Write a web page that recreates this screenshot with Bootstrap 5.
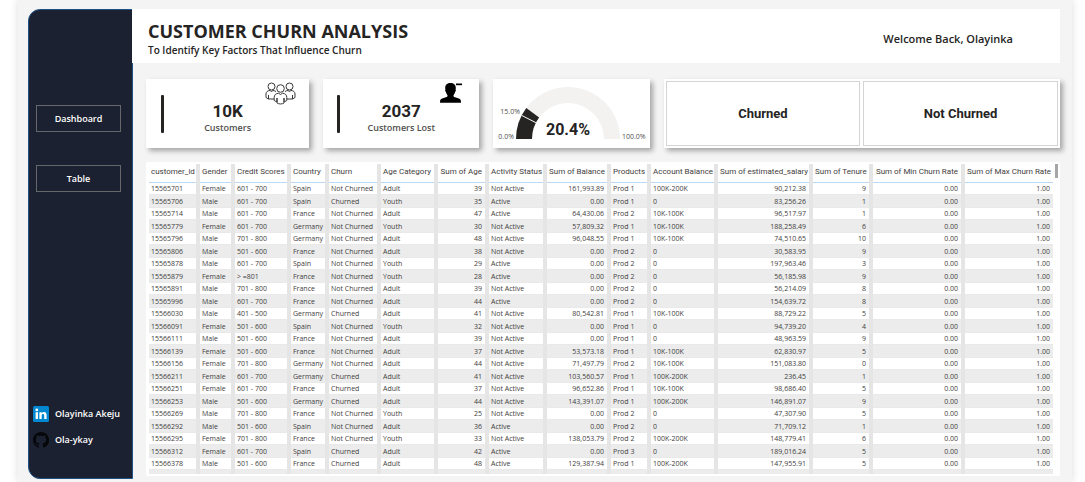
<!DOCTYPE html>
<html lang="en">
<head>
<meta charset="utf-8">
<meta name="viewport" content="width=device-width, initial-scale=1">
<title>Customer Churn Analysis</title>
<link href="https://cdn.jsdelivr.net/npm/bootstrap@5.3.0/dist/css/bootstrap.min.css" rel="stylesheet">
<style>
body { font-family: "Open Sans", "Noto Sans", sans-serif; color: #252423; background: #fff; }
.report { height: 100vh; min-height: 460px; margin: 0 13px 0 18px; padding: 9px 12px 3px 10px; background: #f4f4f4; box-shadow: 0 0 8px rgba(0,0,0,.14); }
.side { width: 105px; background: #1b2130; border: 1px solid #1d5388; border-radius: 12px 0 0 12px; padding: 95px 11px 30px 7px; }
.side .page-btn { height: 27px; border: 1px solid #66676a; border-radius: 0; color: #fff; font-size: 9px; line-height: 12px; font-weight: 600; padding: 0; margin-bottom: 33px; }
.side .profile { color: #fff; font-size: 9px; line-height: 16px; font-weight: 600; margin: 0 0 10px -3px; gap: 6px; white-space: nowrap; }
.side .profile:last-child { margin-bottom: 0; }
.side .profile svg { flex: none; }
.content { min-width: 0; }
.banner { height: 54px; background: #fff; margin-left: -1px; padding: 0 47px 0 16px; }
.banner h1 { font-size: 18px; line-height: 24px; font-weight: 700; margin: 0; }
.banner h2 { font-size: 10px; line-height: 14px; font-weight: 600; margin: 0; }
.welcome { font-size: 11px; line-height: 16px; font-weight: 600; padding-top: 6px; }
.tiles { display: grid; grid-template-columns: 163fr 156fr 156fr 396fr; gap: 14px; margin: 16px 0 14px 13px; height: 69px; }
.tile { background: #fff; box-shadow: 3px 3px 5px rgba(0,0,0,.32); position: relative; }
.tile .rule { width: 3px; height: 38px; border-radius: 1px; background: #252423; position: absolute; left: 9%; top: 16px; }
.tile .pic { position: absolute; right: 13px; top: 3px; }
.tile .pic-lost { right: 17px; }
.tile .value { font: 700 17px/20px Roboto, sans-serif; }
.tile .caption { font-size: 9px; line-height: 14px; font-weight: 600; color: #504f4e; }
.slicer { padding: 2px; gap: 3px; }
.slicer .btn { flex: 1 1 0; border: 1px solid #d4d4d4; border-radius: 0; font: 700 13px/18px Roboto, sans-serif; color: #252423; padding: 0; }
.gauge text { font-family: "Open Sans", sans-serif; font-size: 7px; fill: #504f4e; }
.gauge .total { font: 700 16px Roboto, sans-serif; fill: #252423; }
.grid-box { background: #fff; margin-left: 13px; padding: 2px 7px 2px 3px; position: relative; min-height: 0; margin-bottom: 3px; }
.grid-scroll { height: 100%; overflow-y: auto; scrollbar-width: none; }
.grid-scroll::-webkit-scrollbar { display: none; }
.thumb { position: absolute; right: 2px; top: 2px; width: 3px; height: 14px; background: #a6a6a6; }
.data { width: 100%; table-layout: fixed; border-collapse: separate; border-spacing: 0; font-size: 7px; line-height: 11px; color: #3f3e3d; white-space: nowrap; }
.data th, .data td { padding: 0 3px 0 2px; border: 0; border-right: 4px solid #e5e5e5; }
.data th:last-child, .data td:last-child { border-right: 0; }
.data th { position: sticky; top: 0; background: #fff; height: 19px; font-family: Roboto, sans-serif; font-size: 8px; line-height: 13px; font-weight: 400; padding-bottom: 4px; box-shadow: inset 0 -1px #b9d9f7; }
.data td { height: 12px; border-bottom: 1px solid #e9e9e9; }
.data tr:nth-child(even) td { height: 13px; background: #ececec; }
.data .num { text-align: right; }
</style>
</head>
<body>
<div class="report d-flex">
  <nav class="side d-flex flex-column flex-shrink-0">
    <button type="button" class="btn page-btn">Dashboard</button>
    <button type="button" class="btn page-btn">Table</button>
    <a href="#linkedin" class="profile mt-auto d-flex align-items-center text-decoration-none">
      <svg width="16" height="16" viewBox="0 0 16 16" aria-hidden="true"><rect width="16" height="16" rx="1.5" fill="#0288d1"/><g fill="#fff"><circle cx="3.8" cy="3.9" r="1.4"/><path d="M2.6 6.2H5V13H2.6zM6.4 6.2h2.3v1c.5-.8 1.2-1.2 2.2-1.2 1.8 0 2.7 1.1 2.7 3.200V13h-2.400V9.500c0-1-.4-1.600-1.200-1.600-.9 0-1.300.6-1.300 1.600V13H6.400z"/></g></svg>
      <span>Olayinka Akeju</span>
    </a>
    <a href="#github" class="profile d-flex align-items-center text-decoration-none">
      <svg width="16" height="16" viewBox="0 0 16 16" aria-hidden="true"><path fill="#06070a" d="M8 0C3.580 0 0 3.580 0 8c0 3.540 2.290 6.530 5.470 7.590.4.070.55-.17.55-.38 0-.19-.01-.82-.01-1.490-2.010.37-2.530-.49-2.690-.94-.09-.23-.48-.94-.82-1.130-.28-.15-.68-.52-.01-.53.63-.01 1.080.58 1.230.82.72 1.210 1.870.87 2.330.66.07-.52.28-.87.51-1.070-1.780-.2-3.640-.89-3.640-3.950 0-.87.31-1.590.82-2.150-.08-.2-.36-1.020.08-2.120 0 0 .67-.21 2.200.82.64-.18 1.320-.27 2-.27s1.360.09 2 .27c1.530-1.040 2.200-.82 2.200-.82.44 1.100.16 1.920.08 2.120.51.56.82 1.270.82 2.150 0 3.070-1.870 3.750-3.650 3.950.29.25.54.73.54 1.480 0 1.070-.01 1.930-.01 2.200 0 .21.15.46.55.38A8.010 8.010 0 0 0 16 8c0-4.420-3.580-8-8-8z"/></svg>
      <span>Ola-ykay</span>
    </a>
  </nav>

  <main class="content flex-grow-1 d-flex flex-column">
    <header class="banner d-flex align-items-center justify-content-between flex-shrink-0">
      <div class="pt-1">
        <h1>CUSTOMER CHURN ANALYSIS</h1>
        <h2>To Identify Key Factors That Influence Churn</h2>
      </div>
      <div class="welcome">Welcome Back, Olayinka</div>
    </header>

    <section class="tiles flex-shrink-0">
      <div class="tile text-center d-flex flex-column justify-content-center pt-2">
        <span class="rule"></span>
        <svg class="pic" width="31" height="23" viewBox="0 0 31 23" fill="none" stroke="#3a3938" aria-hidden="true">
          <circle cx="6.500" cy="4.500" r="3.500"/><circle cx="24.500" cy="4.500" r="3.500"/>
          <path d="M9.500 17H3.500V13v4L1 15.500V12c0-2 1.500-3.500 4-3.500l1.500 1 1.500-1c1.200 0 2.200.4 3 1.200M21.500 17h6V13v4l2.500-1.500V12c0-2-1.500-3.500-4-3.500l-1.500 1-1.500-1c-1.200 0-2.200.4-3 1.200"/>
          <circle cx="15.500" cy="6.500" r="3.800" fill="#fff"/>
          <path fill="#fff" d="M13.500 11.200c-2.800.3-4.300 1.800-4.300 4.300v3l2.800 1.500v-4V21c2 1.300 5 1.300 7 0v-5 4l2.800-1.500v-3c0-2.500-1.500-4-4.300-4.300l-2 1.300z"/>
        </svg>
        <div class="value">10K</div>
        <div class="caption">Customers</div>
      </div>
      <div class="tile text-center d-flex flex-column justify-content-center pt-2">
        <span class="rule"></span>
        <svg class="pic pic-lost" width="22" height="21" viewBox="0 0 22 21" aria-hidden="true"><path d="M10.500 1c3.200 0 5.300 1.900 5.300 4.800 0 .7-.1 1.300-.2 1.700.5.400.2 2-.5 2.600-.3 1.400-.8 2.400-1.600 3.100 0 1 .2 1.600.8 1.900l4.500 1.500c1.700.6 2.200 1.800 2.200 3.600 0 .3-.2.600-.6.600H.6c-.4 0-.6-.2-.6-.6 0-1.800.5-3 2.200-3.600l4.400-1.500c.7-.3.9-.9.9-1.900-.8-.7-1.300-1.700-1.600-3.100-.7-.6-1-2.200-.5-2.600-.1-.4-.2-1-.2-1.700C5.200 2.900 7.300 1 10.500 1z"/><path d="M16 1.500h6v1.700h-6z"/></svg>
        <div class="value">2037</div>
        <div class="caption">Customers Lost</div>
      </div>
      <div class="tile text-center d-flex justify-content-center">
        <svg class="gauge" width="156" height="69" viewBox="0 -1 156 69" role="img" aria-label="Churn rate 20.4%">
          <path fill="#f3f2f1" d="M23 59A52 52 0 0 1 127 59H111A36 36 0 0 0 39 59z"/>
          <path fill="#252423" d="M23 59A52 52 0 0 1 33.300 27.900L46.100 37.500A36 36 0 0 0 39 59z"/>
          <path stroke="#fff" d="M28.700 35.400L42.900 42.700"/>
          <text x="27" y="34" text-anchor="end">15.0%</text>
          <text x="21" y="59" text-anchor="end">0.0%</text>
          <text x="129" y="59">100.0%</text>
          <text x="75" y="55" text-anchor="middle" class="total">20.4%</text>
        </svg>
      </div>
      <div class="tile slicer d-flex">
        <button type="button" class="btn">Churned</button>
        <button type="button" class="btn">Not Churned</button>
      </div>
    </section>

    <section class="grid-box flex-grow-1">
      <div class="grid-scroll">
        <table class="data">
          <colgroup id="cols"></colgroup>
          <thead><tr id="head"></tr></thead>
          <tbody id="rows"></tbody>
        </table>
      </div>
      <span class="thumb"></span>
    </section>
  </main>
</div>
<script src="https://cdn.jsdelivr.net/npm/bootstrap@5.3.0/dist/js/bootstrap.bundle.min.js"></script>
<script>
// name, relative width, numeric
const columns = [
  ["customer_id", 51], ["Gender", 35], ["Credit Scores", 56], ["Country", 38], ["Churn", 52],
  ["Age Category", 57], ["Sum of Age", 51, 1], ["Activity Status", 58], ["Sum of Balance", 64, 1],
  ["Products", 40], ["Account Balance", 67], ["Sum of estimated_salary", 95, 1],
  ["Sum of Tenure", 60, 1], ["Sum of Min Churn Rate", 92, 1], ["Sum of Max Churn Rate", 88, 1]
];
const data = `15565701|Female|601 - 700|Spain|Not Churned|Adult|39|Not Active|161,993.89|Prod 1|100K-200K|90,212.38|9
15565706|Male|601 - 700|Spain|Churned|Youth|35|Active|0.00|Prod 1|0|83,256.26|1
15565714|Male|601 - 700|France|Not Churned|Adult|47|Active|64,430.06|Prod 2|10K-100K|96,517.97|1
15565779|Female|601 - 700|Germany|Not Churned|Youth|30|Not Active|57,809.32|Prod 1|10K-100K|188,258.49|6
15565796|Male|701 - 800|Germany|Not Churned|Adult|48|Not Active|96,048.55|Prod 1|10K-100K|74,510.65|10
15565806|Male|501 - 600|France|Not Churned|Adult|38|Not Active|0.00|Prod 2|0|30,583.95|9
15565878|Male|601 - 700|Spain|Not Churned|Youth|29|Active|0.00|Prod 2|0|197,963.46|3
15565879|Female|> =801|France|Not Churned|Youth|28|Active|0.00|Prod 2|0|56,185.98|9
15565891|Male|701 - 800|France|Not Churned|Adult|39|Not Active|0.00|Prod 2|0|56,214.09|8
15565996|Male|601 - 700|France|Not Churned|Adult|44|Active|0.00|Prod 2|0|154,639.72|8
15566030|Male|401 - 500|Germany|Churned|Adult|41|Not Active|80,542.81|Prod 1|10K-100K|88,729.22|5
15566091|Female|501 - 600|Spain|Not Churned|Youth|32|Not Active|0.00|Prod 1|0|94,739.20|4
15566111|Male|501 - 600|France|Not Churned|Adult|39|Not Active|0.00|Prod 1|0|48,963.59|9
15566139|Female|501 - 600|France|Not Churned|Adult|37|Not Active|53,573.18|Prod 1|10K-100K|62,830.97|5
15566156|Female|701 - 800|Germany|Not Churned|Adult|44|Not Active|71,497.79|Prod 2|10K-100K|151,083.80|0
15566211|Female|601 - 700|Germany|Churned|Adult|41|Not Active|103,560.57|Prod 1|100K-200K|236.45|1
15566251|Female|601 - 700|France|Churned|Adult|37|Not Active|96,652.86|Prod 1|10K-100K|98,686.40|5
15566253|Male|501 - 600|Germany|Churned|Adult|44|Not Active|143,391.07|Prod 1|100K-200K|146,891.07|9
15566269|Male|701 - 800|France|Not Churned|Youth|25|Not Active|0.00|Prod 2|0|47,307.90|5
15566292|Male|501 - 600|Spain|Not Churned|Adult|36|Active|0.00|Prod 2|0|71,709.12|1
15566295|Female|701 - 800|France|Not Churned|Youth|33|Not Active|138,053.79|Prod 2|100K-200K|148,779.41|6
15566312|Female|601 - 700|Spain|Churned|Adult|42|Active|0.00|Prod 3|0|189,016.24|5
15566378|Male|501 - 600|France|Churned|Adult|48|Active|129,387.94|Prod 1|100K-200K|147,955.91|5
15566380|Female|501 - 600|Spain|Not Churned|Youth|30|Active|98,343.07|Prod 2|10K-100K|148,778.88|10`;
const cls = i => columns[i][2] ? ' class="num"' : '';
document.getElementById("cols").innerHTML = columns.map(c => `<col style="width:${c[1]}px">`).join("");
document.getElementById("head").innerHTML = columns.map((c, i) => `<th scope="col"${cls(i)}>${c[0]}</th>`).join("");
document.getElementById("rows").innerHTML = data.split("\n").map(line =>
  "<tr>" + (line + "|0.00|1.00").split("|").map((v, i) => `<td${cls(i)}>${v.replace(">", "&gt;")}</td>`).join("") + "</tr>").join("");
</script>
</body>
</html>
